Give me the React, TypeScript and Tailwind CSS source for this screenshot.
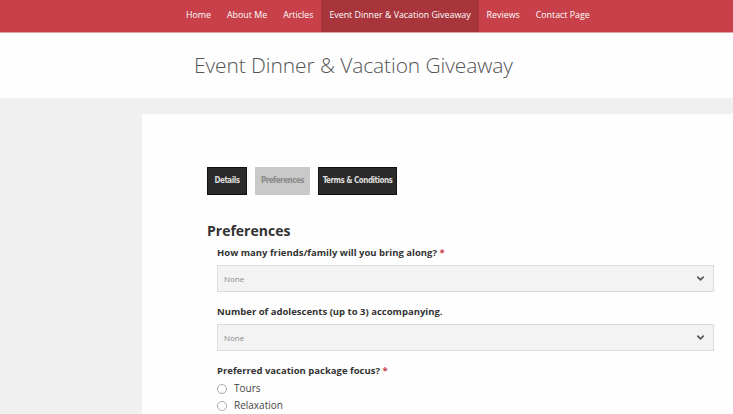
import { ChevronDown } from 'lucide-react';

const navItems = ['Home', 'About Me', 'Articles', 'Event Dinner & Vacation Giveaway', 'Reviews', 'Contact Page'];

function Select() {
  return (
    <div className="flex items-center justify-between h-[27px] bg-[#f3f3f3] border border-[#dcdcdc] pl-[6px] pr-[7px]">
      <span className="text-[8px] text-[#8a8a8a]">None</span>
      <ChevronDown className="w-[11px] h-[11px] text-[#555]" strokeWidth={3.5} />
    </div>
  );
}

function Radio({ label }: { label: string }) {
  return (
    <div className="flex items-center gap-[7px] h-[17px]">
      <span className="w-[10px] h-[10px] rounded-full border border-[#aaa] bg-white" />
      <span className="text-[10px] text-[#444]">{label}</span>
    </div>
  );
}

export default function App() {
  return (
    <div className="w-[733px] h-[414px] overflow-hidden bg-[#f0f0f0]" style={{ fontFamily: '"Open Sans", sans-serif' }}>
      <nav className="h-[33px] bg-[#c8414a] border-b border-[#e9a4a8] flex pl-[178px]">
        {navItems.map((item) => (
          <div
            key={item}
            className={`h-full flex items-center px-[8px] text-[8.85px] text-white ${
              item.startsWith('Event') ? 'bg-[#a8353c]' : ''
            }`}
          >
            {item}
          </div>
        ))}
      </nav>
      <header className="h-[65px] bg-[#fefefe] flex items-center pl-[194px]">
        <h1 className="text-[21px] font-light text-[#555] tracking-[-0.1px]">Event Dinner &amp; Vacation Giveaway</h1>
      </header>
      <div className="pt-[16px] pl-[142px]">
        <div className="bg-[#fefefe] h-[320px] pt-[53px] pl-[65px] pr-[19px]">
          <div className="flex gap-[8px] font-bold" style={{ fontFamily: '"DejaVu Sans Condensed", "DejaVu Sans", sans-serif' }}>
            <div className="h-[28px] w-[40px] justify-center flex items-center bg-[#2b2b2b] border border-[#111] text-[8px] text-[#ddd] tracking-[-0.5px]">Details</div>
            <div className="h-[28px] w-[55px] justify-center flex items-center bg-[#c9c9c9] text-[8px] text-[#888] tracking-[-0.5px]">Preferences</div>
            <div className="h-[28px] w-[79px] justify-center flex items-center bg-[#2b2b2b] border border-[#111] text-[8px] text-[#ddd] tracking-[-0.5px]">Terms &amp; Conditions</div>
          </div>
          <h2 className="mt-[26px] text-[14px] font-bold text-[#333] leading-[20px]">Preferences</h2>
          <div className="pl-[10px]">
            <div className="mt-[5px] text-[9.5px] font-bold text-[#333] leading-[14px]">
              How many friends/family will you bring along? <span className="text-[#c8414a]">*</span>
            </div>
            <div className="mt-[5px]"><Select /></div>
            <div className="mt-[13px] text-[9.5px] font-bold text-[#333] leading-[14px]">Number of adolescents (up to 3) accompanying.</div>
            <div className="mt-[5px]"><Select /></div>
            <div className="mt-[13px] text-[9.5px] font-bold text-[#333] leading-[14px]">
              Preferred vacation package focus? <span className="text-[#c8414a]">*</span>
            </div>
            <div className="mt-[2px]">
              <Radio label="Tours" />
              <Radio label="Relaxation" />
            </div>
          </div>
        </div>
      </div>
    </div>
  );
}
